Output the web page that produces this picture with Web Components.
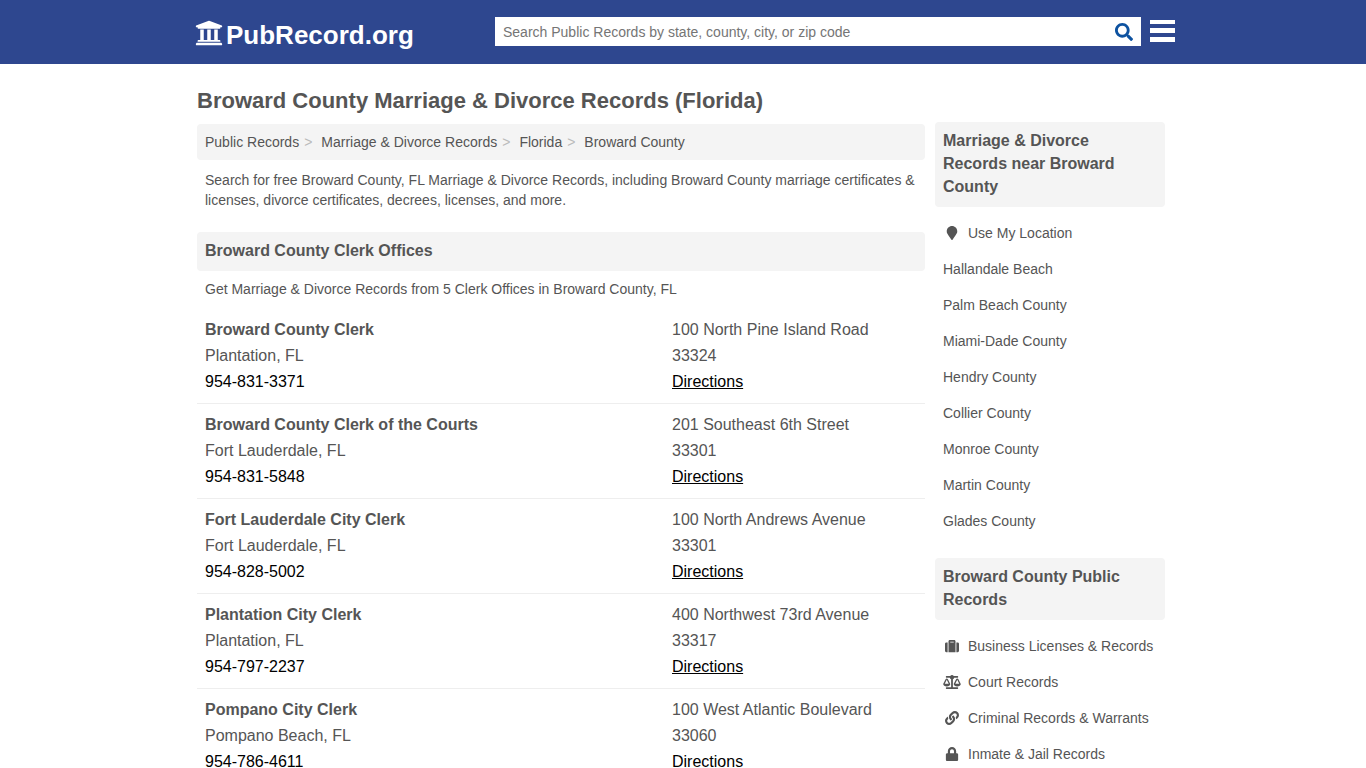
<!DOCTYPE html>
<html lang="en">
<head>
<meta charset="utf-8">
<meta name="viewport" content="width=device-width, initial-scale=1">
<title>Broward County Marriage &amp; Divorce Records (Florida)</title>
<style>
  body {
    margin: 0;
    background: #fff;
    color: #555;
    font: 14px/20px "Liberation Sans", Arial, sans-serif;
  }
</style>
</head>
<body>

<site-header></site-header>

<page-layout>
  <span slot="title">Broward County Marriage &amp; Divorce Records (Florida)</span>

  <bread-crumbs>
    <a href="#">Public Records</a>
    <a href="#">Marriage &amp; Divorce Records</a>
    <a href="#">Florida</a>
    <a href="#">Broward County</a>
  </bread-crumbs>
  <text-block roomy>Search for free Broward County, FL Marriage &amp; Divorce Records, including Broward County marriage certificates &amp; licenses, divorce certificates, decrees, licenses, and more.</text-block>

  <section-heading>Broward County Clerk Offices</section-heading>
  <text-block>Get Marriage &amp; Divorce Records from 5 Clerk Offices in Broward County, FL</text-block>
  <office-row name="Broward County Clerk" city="Plantation, FL" phone="954-831-3371" street="100 North Pine Island Road" zip="33324"></office-row>
  <office-row name="Broward County Clerk of the Courts" city="Fort Lauderdale, FL" phone="954-831-5848" street="201 Southeast 6th Street" zip="33301"></office-row>
  <office-row name="Fort Lauderdale City Clerk" city="Fort Lauderdale, FL" phone="954-828-5002" street="100 North Andrews Avenue" zip="33301"></office-row>
  <office-row name="Plantation City Clerk" city="Plantation, FL" phone="954-797-2237" street="400 Northwest 73rd Avenue" zip="33317"></office-row>
  <office-row name="Pompano City Clerk" city="Pompano Beach, FL" phone="954-786-4611" street="100 West Atlantic Boulevard" zip="33060"></office-row>

  <side-panel slot="side">
    <span slot="heading">Marriage &amp; Divorce Records near Broward County</span>
    <side-link icon="marker">Use My Location</side-link>
    <side-link>Hallandale Beach</side-link>
    <side-link>Palm Beach County</side-link>
    <side-link>Miami-Dade County</side-link>
    <side-link>Hendry County</side-link>
    <side-link>Collier County</side-link>
    <side-link>Monroe County</side-link>
    <side-link>Martin County</side-link>
    <side-link>Glades County</side-link>
  </side-panel>
  <side-panel slot="side">
    <span slot="heading">Broward County Public Records</span>
    <side-link icon="suitcase">Business Licenses &amp; Records</side-link>
    <side-link icon="scale">Court Records</side-link>
    <side-link icon="link">Criminal Records &amp; Warrants</side-link>
    <side-link icon="lock">Inmate &amp; Jail Records</side-link>
  </side-panel>
</page-layout>

<script>
// [viewBox, path]
const ICONS = {
  bank: ['0 0 512 512', 'M496 128v16a8 8 0 0 1-8 8h-24v12c0 6.627-5.373 12-12 12H60c-6.627 0-12-5.373-12-12v-12H24a8 8 0 0 1-8-8v-16a8 8 0 0 1 4.941-7.392l232-88a7.996 7.996 0 0 1 6.118 0l232 88A8 8 0 0 1 496 128zm-24 304H40c-13.255 0-24 10.745-24 24v16a8 8 0 0 0 8 8h464a8 8 0 0 0 8-8v-16c0-13.255-10.745-24-24-24zM96 192v192H60c-6.627 0-12 5.373-12 12v20h416v-20c0-6.627-5.373-12-12-12h-36V192h-64v192h-64V192h-64v192h-64V192H96z'],
  search: ['0 0 512 512', 'M505 442.700L405.300 343c-4.500-4.500-10.600-7-17-7H372c27.600-35.300 44-79.700 44-128C416 93.100 322.900 0 208 0S0 93.100 0 208s93.100 208 208 208c48.300 0 92.700-16.400 128-44v16.300c0 6.400 2.500 12.500 7 17l99.700 99.700c9.400 9.400 24.600 9.400 33.900 0l28.300-28.300c9.400-9.400 9.400-24.600.1-34zM208 336c-70.700 0-128-57.200-128-128 0-70.700 57.200-128 128-128 70.700 0 128 57.200 128 128 0 70.700-57.200 128-128 128z'],
  menu: ['0 0 25 23', 'M0 0h25v4H0zM0 8h25v5H0zM0 17h25v5H0z'],
  marker: ['0 0 384 512', 'M172.268 501.670C26.970 291.031 0 269.413 0 192 0 85.961 85.961 0 192 0s192 85.961 192 192c0 77.413-26.970 99.031-172.268 309.670-9.535 13.774-29.930 13.773-39.464 0z'],
  suitcase: ['0 0 512 512', 'M128 480h256V80c0-26.500-21.500-48-48-48H176c-26.500 0-48 21.500-48 48v400zm64-384h128v32H192V96zm320 80v256c0 26.500-21.500 48-48 48h-48V128h48c26.500 0 48 21.500 48 48zM96 480H48c-26.500 0-48-21.500-48-48V176c0-26.500 21.500-48 48-48h48v352z'],
  scale: ['0 0 640 512', 'M256 336h-.02c0-16.180 1.340-8.730-85.050-181.510-17.650-35.290-68.190-35.360-85.870 0C-2.060 328.750.02 320.330.02 336H0c0 44.180 57.310 80 128 80s128-35.820 128-80zM128 176l72 144H56l72-144zm511.980 160c0-16.180 1.340-8.730-85.050-181.510-17.650-35.290-68.190-35.360-85.870 0-87.120 174.260-85.040 165.840-85.040 181.510H384c0 44.180 57.310 80 128 80s128-35.820 128-80h-.02zM440 320l72-144 72 144H440zm88 128H352V153.250c23.510-10.290 41.160-31.480 46.390-57.250H528c8.840 0 16-7.160 16-16V48c0-8.840-7.160-16-16-16H383.640C369.040 12.680 346.090 0 320 0s-49.040 12.680-63.640 32H112c-8.840 0-16 7.160-16 16v32c0 8.840 7.160 16 16 16h129.610c5.230 25.760 22.870 46.960 46.390 57.250V448H112c-8.840 0-16 7.160-16 16v32c0 8.840 7.160 16 16 16h416c8.840 0 16-7.160 16-16v-32c0-8.840-7.160-16-16-16z'],
  link: ['0 0 512 512', 'M326.612 185.391c59.747 59.809 58.927 155.698.36 214.590-.11.12-.24.25-.36.37l-67.200 67.200c-59.270 59.270-155.699 59.262-214.960 0-59.270-59.260-59.270-155.700 0-214.960l37.106-37.106c9.840-9.840 26.786-3.300 27.294 10.606.648 17.722 3.826 35.527 9.690 52.721 1.986 5.822.567 12.262-3.783 16.612l-13.087 13.087c-28.026 28.026-28.905 73.660-1.155 101.960 28.024 28.579 74.086 28.749 102.325.51l67.200-67.190c28.191-28.191 28.073-73.757 0-101.830-3.701-3.694-7.429-6.564-10.341-8.569a16.037 16.037 0 0 1-6.947-12.606c-.396-10.567 3.348-21.456 11.698-29.806l21.054-21.055c5.521-5.521 14.182-6.199 20.584-1.731a152.482 152.482 0 0 1 20.522 17.197zM467.547 44.449c-59.261-59.262-155.690-59.270-214.960 0l-67.200 67.200c-.12.12-.25.25-.36.37-58.566 58.892-59.387 154.781.36 214.590a152.454 152.454 0 0 0 20.521 17.196c6.402 4.468 15.064 3.789 20.584-1.731l21.054-21.055c8.350-8.350 12.094-19.239 11.698-29.806a16.037 16.037 0 0 0-6.947-12.606c-2.912-2.005-6.640-4.875-10.341-8.569-28.073-28.073-28.191-73.639 0-101.830l67.200-67.190c28.239-28.239 74.300-28.069 102.325.51 27.750 28.300 26.872 73.934-1.155 101.960l-13.087 13.087c-4.350 4.350-5.769 10.790-3.783 16.612 5.864 17.194 9.042 34.999 9.690 52.721.509 13.906 17.454 20.446 27.294 10.606l37.106-37.106c59.271-59.259 59.271-155.699.001-214.959z'],
  lock: ['0 0 448 512', 'M400 224h-24v-72C376 68.200 307.800 0 224 0S72 68.200 72 152v72H48c-26.500 0-48 21.500-48 48v192c0 26.500 21.500 48 48 48h352c26.500 0 48-21.500 48-48V272c0-26.500-21.500-48-48-48zm-104 0H152v-72c0-39.700 32.300-72 72-72s72 32.300 72 72v72z']
};

function icon(name) {
  const [box, path] = ICONS[name];
  return `<svg viewBox="${box}" fill="currentColor" aria-hidden="true"><path d="${path}"/></svg>`;
}

class SiteHeader extends HTMLElement {
  constructor() {
    super();
    this.attachShadow({ mode: 'open' }).innerHTML = `
      <style>
        :host { display: block; background: #2e478f; }
        header {
          display: flex;
          align-items: center;
          box-sizing: border-box;
          max-width: 984px;
          min-height: 64px;
          margin: 0 auto;
          padding: 0 0 1px 4px;
        }
        .logo {
          display: flex;
          align-items: flex-start;
          gap: 3px;
          flex: 1;
          padding-top: 7px;
          color: #fff;
          font-size: 26px;
          line-height: 32px;
          font-weight: bold;
          text-decoration: none;
        }
        .logo svg { width: 28px; height: 28px; }
        form {
          display: flex;
          flex: 0 1 646px;
          background: #fff;
          height: 29px;
        }
        input {
          flex: 1;
          min-width: 0;
          border: 0;
          padding: 0 8px;
          background: none;
          color: #555;
          font: inherit;
          outline: none;
        }
        input::placeholder { color: #757575; opacity: 1; }
        button {
          display: flex;
          align-items: center;
          border: 0;
          padding: 0;
          background: none;
          cursor: pointer;
        }
        form button { padding: 0 8px; color: #0d52a0; }
        form svg { width: 18px; height: 18px; }
        .menu { margin-left: 9px; color: #fff; }
        .menu svg { width: 25px; height: 23px; }
      </style>
      <header>
        <a class="logo" href="#">${icon('bank')}<span>PubRecord.org</span></a>
        <form role="search">
          <input type="text" aria-label="Search Public Records" placeholder="Search Public Records by state, county, city, or zip code">
          <button type="button" aria-label="Search">${icon('search')}</button>
        </form>
        <button class="menu" type="button" aria-label="Menu">${icon('menu')}</button>
      </header>`;
  }
}

class PageLayout extends HTMLElement {
  constructor() {
    super();
    this.attachShadow({ mode: 'open' }).innerHTML = `
      <style>
        :host {
          display: block;
          box-sizing: border-box;
          max-width: 980px;
          margin: 0 auto;
          padding: 22px 8px 22px 4px;
        }
        h1 { margin: 0 0 8px; font-size: 22px; line-height: 30px; }
        .columns { display: flex; gap: 10px; align-items: flex-start; }
        main { flex: 1; min-width: 0; }
        aside { flex: 0 0 230px; padding-top: 36px; }
      </style>
      <div class="columns">
        <main>
          <h1><slot name="title"></slot></h1>
          <slot></slot>
        </main>
        <aside><slot name="side"></slot></aside>
      </div>`;
  }
}

class BreadCrumbs extends HTMLElement {
  constructor() {
    super();
    this.attachShadow({ mode: 'open' }).innerHTML = `
      <style>
        :host { display: block; background: #f4f4f4; border-radius: 4px; }
        nav { display: flex; flex-wrap: wrap; padding: 8px; }
        ::slotted(a) { color: #555; text-decoration: none; }
        .sep { padding: 0 9px 0 5px; color: #bbb; }
      </style>
      <nav aria-label="Breadcrumb"></nav>`;
  }

  connectedCallback() {
    const nav = this.shadowRoot.querySelector('nav');
    nav.innerHTML = '';
    [...this.children].forEach((link, i) => {
      if (i > 0) {
        nav.insertAdjacentHTML('beforeend', '<span class="sep">&gt;</span>');
      }
      link.slot = 'crumb' + i;
      nav.insertAdjacentHTML('beforeend', `<slot name="crumb${i}"></slot>`);
    });
  }
}

class SectionHeading extends HTMLElement {
  constructor() {
    super();
    this.attachShadow({ mode: 'open' }).innerHTML = `
      <style>
        :host { display: block; }
        h2 {
          margin: 0;
          padding: 7px 8px 9px;
          background: #f4f4f4;
          border-radius: 4px;
          font-size: 16px;
          line-height: 23px;
        }
      </style>
      <h2><slot></slot></h2>`;
  }
}

class TextBlock extends HTMLElement {
  constructor() {
    super();
    this.attachShadow({ mode: 'open' }).innerHTML = `
      <style>
        :host { display: block; padding: 8px 8px 10px; }
        :host([roomy]) { padding: 10px 8px 22px; }
        p { margin: 0; }
      </style>
      <p><slot></slot></p>`;
  }
}

class OfficeRow extends HTMLElement {
  connectedCallback() {
    if (this.shadowRoot) return;
    const get = name => this.getAttribute(name);
    this.attachShadow({ mode: 'open' }).innerHTML = `
      <style>
        :host {
          display: grid;
          grid-template-columns: 1fr 245px;
          padding: 8px;
          border-bottom: 1px solid #eee;
          font-size: 16px;
          line-height: 26px;
        }
        h3, p { margin: 0; font-size: 16px; }
        a { color: #000; }
        .name { color: #555; }
        .name, .phone { text-decoration: none; }
      </style>
      <div>
        <h3><a class="name" href="#">${get('name')}</a></h3>
        <p>${get('city')}</p>
        <p><a class="phone" href="tel:${get('phone')}">${get('phone')}</a></p>
      </div>
      <div>
        <p>${get('street')}</p>
        <p>${get('zip')}</p>
        <p><a href="#">Directions</a></p>
      </div>`;
  }
}

class SidePanel extends HTMLElement {
  constructor() {
    super();
    this.attachShadow({ mode: 'open' }).innerHTML = `
      <style>
        :host { display: block; margin-bottom: 19px; }
        section-heading { margin-bottom: 8px; }
      </style>
      <section-heading><slot name="heading"></slot></section-heading>
      <slot></slot>`;
  }
}

class SideLink extends HTMLElement {
  connectedCallback() {
    if (this.shadowRoot) return;
    const name = this.getAttribute('icon');
    this.attachShadow({ mode: 'open' }).innerHTML = `
      <style>
        :host { display: block; }
        a {
          display: flex;
          align-items: center;
          gap: 7px;
          padding: 8px;
          color: #555;
          text-decoration: none;
        }
        svg { width: 18px; height: 14px; }
      </style>
      <a href="#">${name ? icon(name) : ''}<span><slot></slot></span></a>`;
  }
}

customElements.define('site-header', SiteHeader);
customElements.define('page-layout', PageLayout);
customElements.define('bread-crumbs', BreadCrumbs);
customElements.define('section-heading', SectionHeading);
customElements.define('text-block', TextBlock);
customElements.define('office-row', OfficeRow);
customElements.define('side-panel', SidePanel);
customElements.define('side-link', SideLink);
</script>
</body>
</html>
